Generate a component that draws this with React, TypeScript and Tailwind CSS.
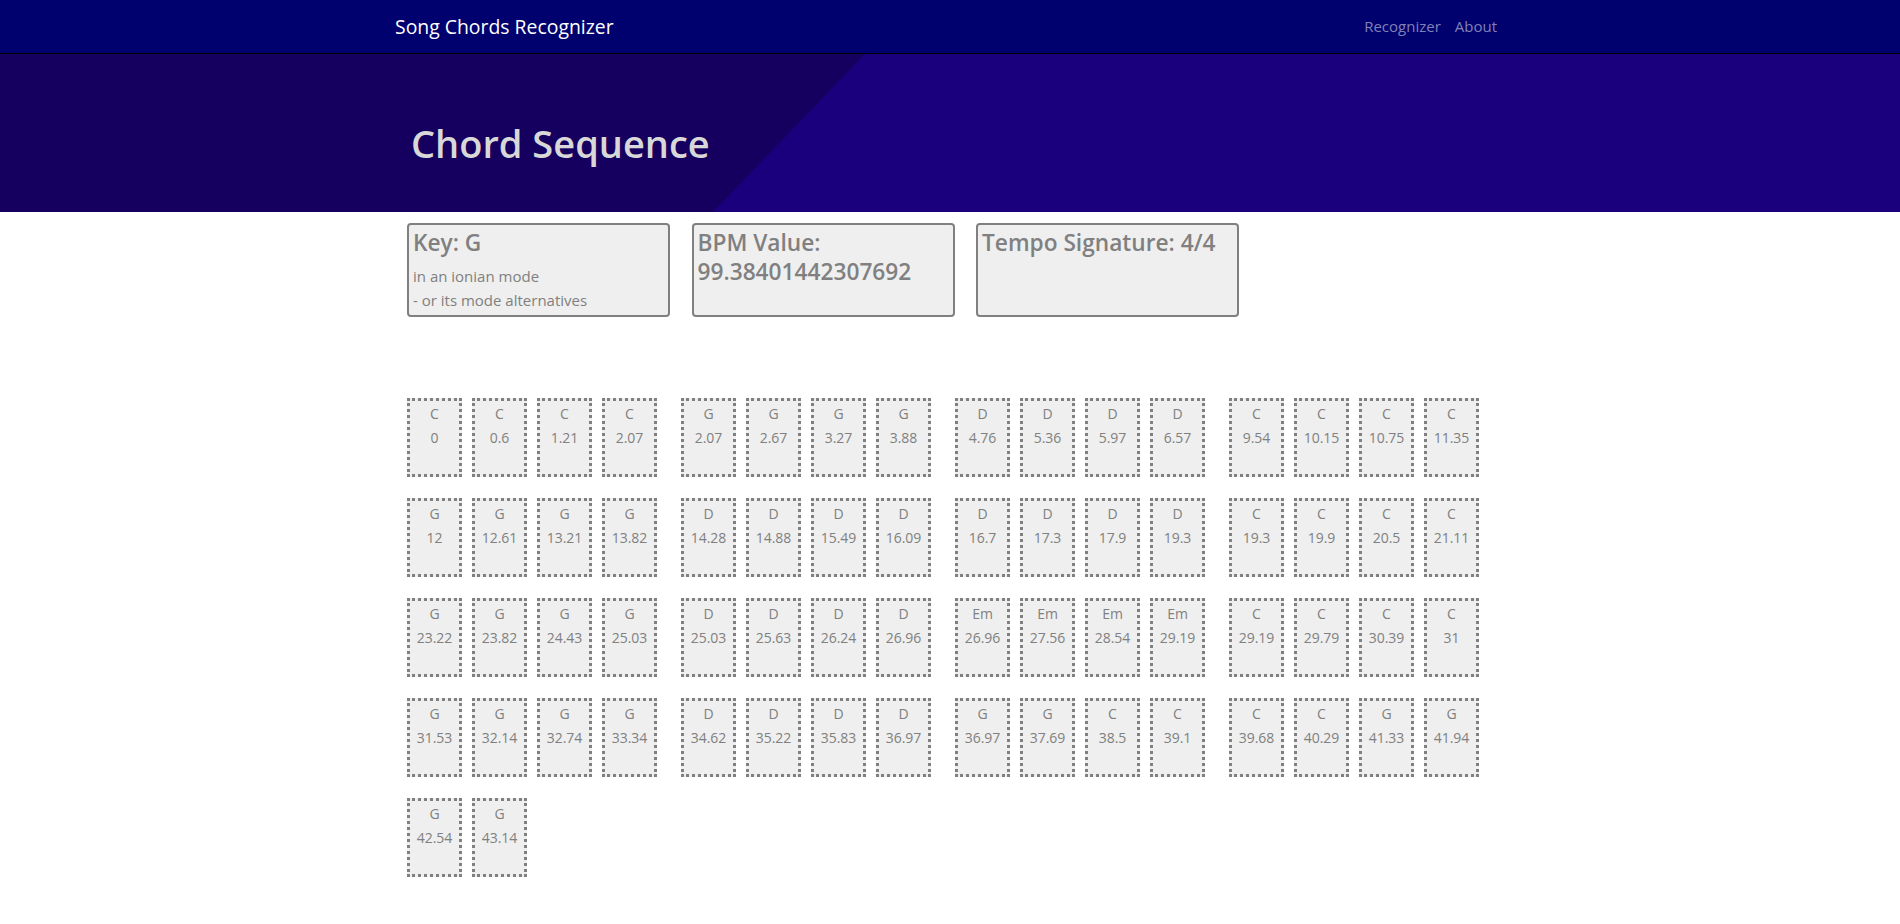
import React from "react";

type Chord = [string, string];

const rows: Chord[][][] = [
  [
    [["C", "0"], ["C", "0.6"], ["C", "1.21"], ["C", "2.07"]],
    [["G", "2.07"], ["G", "2.67"], ["G", "3.27"], ["G", "3.88"]],
    [["D", "4.76"], ["D", "5.36"], ["D", "5.97"], ["D", "6.57"]],
    [["C", "9.54"], ["C", "10.15"], ["C", "10.75"], ["C", "11.35"]],
  ],
  [
    [["G", "12"], ["G", "12.61"], ["G", "13.21"], ["G", "13.82"]],
    [["D", "14.28"], ["D", "14.88"], ["D", "15.49"], ["D", "16.09"]],
    [["D", "16.7"], ["D", "17.3"], ["D", "17.9"], ["D", "19.3"]],
    [["C", "19.3"], ["C", "19.9"], ["C", "20.5"], ["C", "21.11"]],
  ],
  [
    [["G", "23.22"], ["G", "23.82"], ["G", "24.43"], ["G", "25.03"]],
    [["D", "25.03"], ["D", "25.63"], ["D", "26.24"], ["D", "26.96"]],
    [["Em", "26.96"], ["Em", "27.56"], ["Em", "28.54"], ["Em", "29.19"]],
    [["C", "29.19"], ["C", "29.79"], ["C", "30.39"], ["C", "31"]],
  ],
  [
    [["G", "31.53"], ["G", "32.14"], ["G", "32.74"], ["G", "33.34"]],
    [["D", "34.62"], ["D", "35.22"], ["D", "35.83"], ["D", "36.97"]],
    [["G", "36.97"], ["G", "37.69"], ["C", "38.5"], ["C", "39.1"]],
    [["C", "39.68"], ["C", "40.29"], ["G", "41.33"], ["G", "41.94"]],
  ],
  [[["G", "42.54"], ["G", "43.14"]]],
];

const groups: Chord[][] = rows.flat();

function Tile({ c }: { c: Chord }) {
  return (
    <div className="w-[55px] h-[79px] border-[3px] border-dotted border-[#808080] bg-[#efefef] text-center text-[14px] leading-[24px] text-[#808080]">
      <div className="mt-[1px]">{c[0]}</div>
      <div>{c[1]}</div>
    </div>
  );
}

export default function App() {
  return (
    <div
      className="min-h-[924px] bg-white"
      style={{ fontFamily: '"Open Sans", "Noto Sans", sans-serif' }}
    >
      <nav className="h-[54px] bg-[#00006f] border-b border-black">
        <div className="mx-auto w-[1140px] px-[15px] h-full flex items-center justify-between">
          <span className="text-[19.4px] text-white">Song Chords Recognizer</span>
          <div className="flex items-center">
            <span className="px-[7px] text-[15px] text-[#8080b7]">Recognizer</span>
            <span className="pl-[7px] pr-[8px] text-[15px] text-[#8080b7]">About</span>
          </div>
        </div>
      </nav>

      <header className="relative h-[158px] bg-[#16005f] overflow-hidden">
        <svg className="absolute inset-0" width="100%" height="158">
          <polygon points="865,0 2400,0 2400,158 713,158" fill="#1b007e" />
        </svg>
        <div className="relative mx-auto w-[1140px] px-[15px] h-full flex items-center">
          <h1 className="ml-[16px] mt-[20px] text-[38px] font-semibold text-[#d8d8d8] leading-none">
            Chord Sequence
          </h1>
        </div>
      </header>

      <main className="mx-auto w-[1140px] px-[27px] pt-[11px] pb-[40px]">
        <div className="flex gap-[21.5px]">
          <div className="w-[263px] h-[94px] border-2 border-[#808080] rounded-[4px] bg-[#efefef] px-[4px] pt-[3px] text-[#808080]">
            <div className="text-[22.7px] font-semibold leading-[29px]">Key: G</div>
            <div className="text-[15px] leading-[24px] mt-[7px]">in an ionian mode</div>
            <div className="text-[15px] leading-[24px]">- or its mode alternatives</div>
          </div>
          <div className="w-[263px] h-[94px] border-2 border-[#808080] rounded-[4px] bg-[#efefef] px-[4px] pt-[3px] text-[#808080]">
            <div className="text-[22.7px] font-semibold leading-[29px]">BPM Value:</div>
            <div className="text-[22.7px] font-semibold leading-[29px]">99.38401442307692</div>
          </div>
          <div className="w-[263px] h-[94px] border-2 border-[#808080] rounded-[4px] bg-[#efefef] px-[4px] pt-[3px] text-[#808080]">
            <div className="text-[22.7px] font-semibold leading-[29px]">Tempo Signature: 4/4</div>
          </div>
        </div>

        <div className="mt-[81px] flex flex-wrap gap-x-[24px] gap-y-[21px] w-[1098px]">
          {groups.map((g, i) => (
            <div key={i} className="flex gap-[10px]">
              {g.map((c, j) => (
                <Tile key={j} c={c} />
              ))}
            </div>
          ))}
        </div>
      </main>
    </div>
  );
}
